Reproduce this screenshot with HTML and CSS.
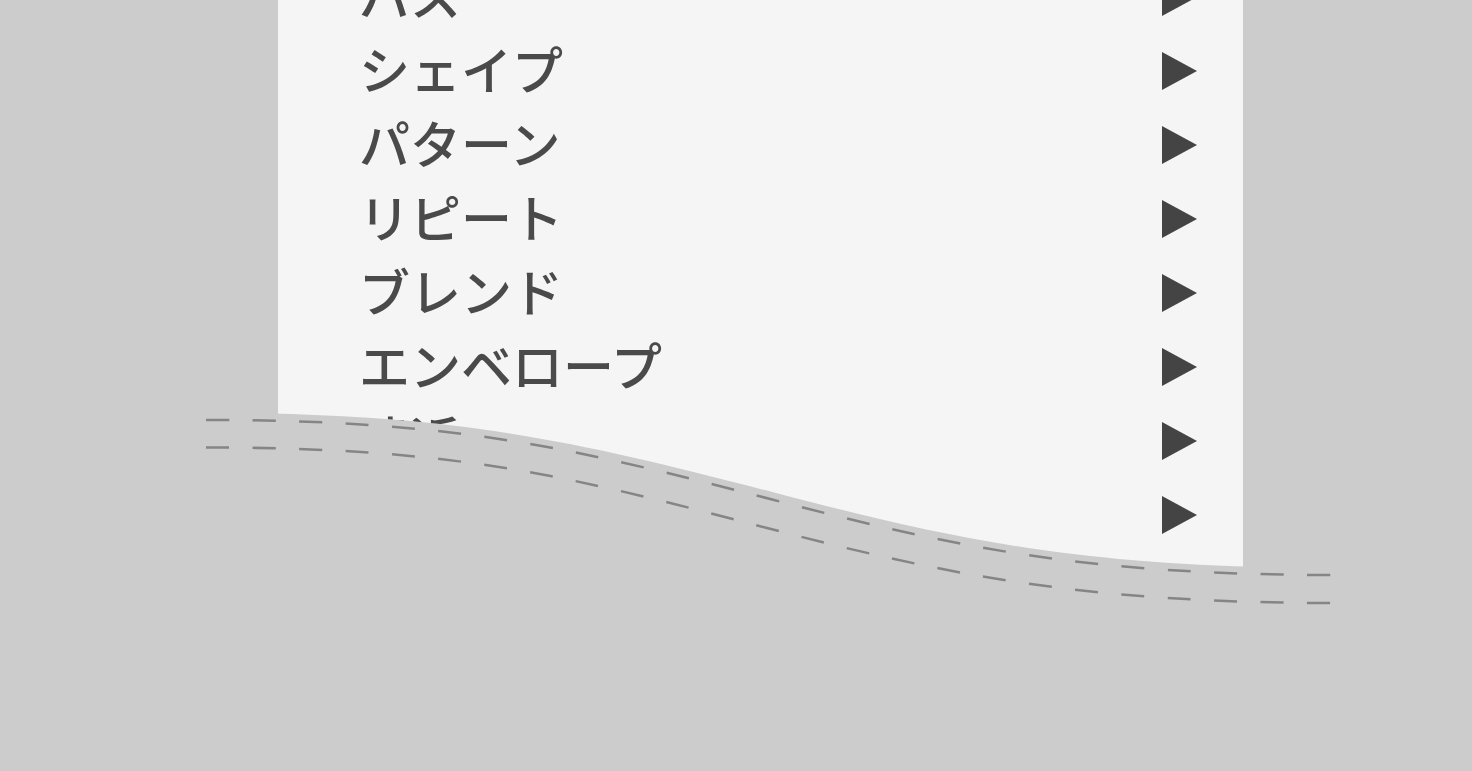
FILE: index.html
```html
<!DOCTYPE html>
<html lang="ja">
<head>
<meta charset="utf-8">
<title>メニュー</title>
<link rel="stylesheet" href="styles.css">
</head>
<body>
<div class="stage">
  <div class="panel">
    <ul class="menu">
      <li class="item"><span class="label">パス</span><svg class="arrow" viewBox="0 0 35 38"><polygon points="0,0 35,19 0,38"/></svg></li>
      <li class="item"><span class="label">シェイプ</span><svg class="arrow" viewBox="0 0 35 38"><polygon points="0,0 35,19 0,38"/></svg></li>
      <li class="item"><span class="label">パターン</span><svg class="arrow" viewBox="0 0 35 38"><polygon points="0,0 35,19 0,38"/></svg></li>
      <li class="item"><span class="label">リピート</span><svg class="arrow" viewBox="0 0 35 38"><polygon points="0,0 35,19 0,38"/></svg></li>
      <li class="item"><span class="label">ブレンド</span><svg class="arrow" viewBox="0 0 35 38"><polygon points="0,0 35,19 0,38"/></svg></li>
      <li class="item"><span class="label">エンベロープ</span><svg class="arrow" viewBox="0 0 35 38"><polygon points="0,0 35,19 0,38"/></svg></li>
      <li class="item"><span class="label">遠近</span><svg class="arrow" viewBox="0 0 35 38"><polygon points="0,0 35,19 0,38"/></svg></li>
      <li class="item"><span class="label">ライブペイント</span><svg class="arrow" viewBox="0 0 35 38"><polygon points="0,0 35,19 0,38"/></svg></li>
    </ul>
  </div>
  <svg class="tear" viewBox="0 0 1472 771" width="1472" height="771">
    <path d="M206 420 C456 420 574 448 774 500 C954 547 1085 575 1335 575"/>
    <path d="M206 447.5 C456 447.5 567 475.5 767 528 C947 575 1085 603 1335 603"/>
  </svg>
</div>
</body>
</html>
```
FILE: styles.css
```css
html, body {
  margin: 0;
  padding: 0;
  background: #cccccc;
  overflow: hidden;
}

.stage {
  position: relative;
  width: 1472px;
  height: 771px;
  overflow: hidden;
}

.panel {
  margin-left: 278px;
  margin-top: -40px;
  width: 965px;
  height: 612px;
  background: #f5f5f5;
  clip-path: path("M -80 -100 L 1060 -100 L 1060 608 L 1057 608 C 807 608 678 580 498 533 C 298 481 178 453 -72 453 L -80 453 Z");
}

.menu {
  list-style: none;
  margin: 0;
  padding: 0 46px 0 81px;
}

.item {
  height: 74px;
  display: flex;
  align-items: center;
  justify-content: space-between;
}

.label {
  font-family: "Noto Sans CJK JP", "Noto Sans", sans-serif;
  font-size: 51px;
  font-weight: 500;
  line-height: 68px;
  margin-bottom: 6px;
  color: #4a4a4a;
}

.arrow {
  width: 35px;
  height: 38px;
  fill: #444444;
}

.tear {
  position: absolute;
  left: 0;
  top: 0;
  pointer-events: none;
}

.tear path {
  fill: none;
  stroke: #858585;
  stroke-width: 2.5;
  stroke-dasharray: 23 23.5;
}
```
